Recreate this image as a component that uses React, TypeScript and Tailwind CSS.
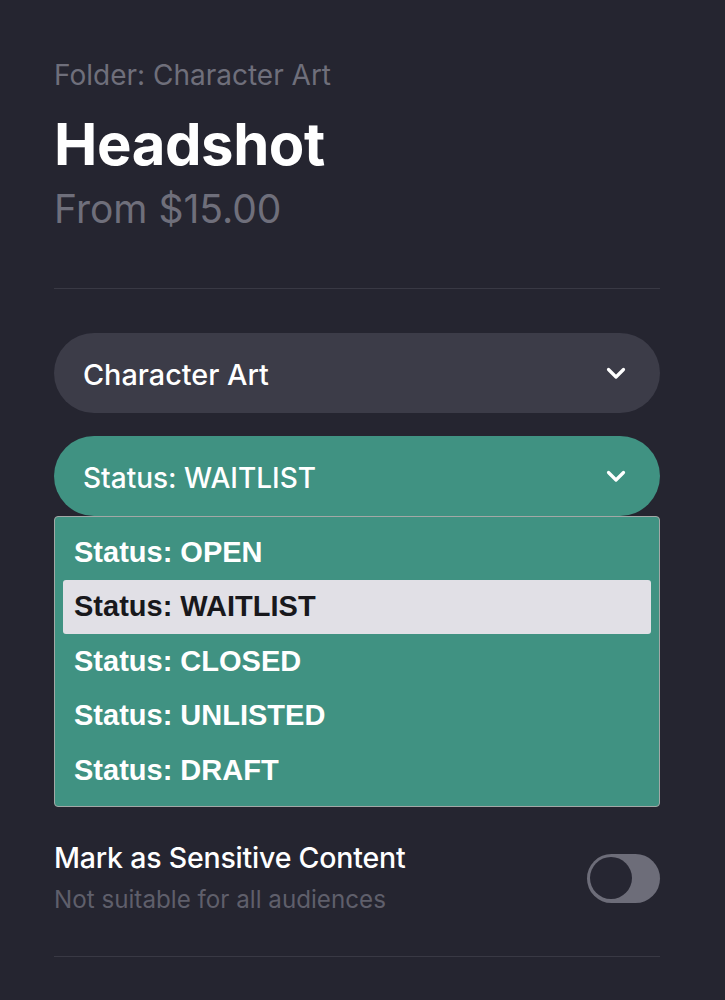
import { useState } from "react";

const statuses = ["OPEN", "WAITLIST", "CLOSED", "UNLISTED", "DRAFT"];

function Chevron() {
  return (
    <svg width="20" height="13" viewBox="0 0 20 13" fill="none">
      <polyline points="2.5,2.5 10,10 17.5,2.5" stroke="white" strokeWidth="3.2" strokeLinecap="round" strokeLinejoin="round" />
    </svg>
  );
}

export default function App() {
  const [status, setStatus] = useState("WAITLIST");
  const [sensitive, setSensitive] = useState(false);

  return (
    <div className="min-h-screen bg-[#252530] font-['Inter',sans-serif]">
      <div className="ml-[54px] w-[606px] pt-[58px] pb-[42px]">
        {/* header */}
        <div className="text-[28px] leading-[34px] text-[#6f6f7b]">Folder: Character Art</div>
        <h1 className="mt-[19px] text-[58px] leading-[66px] font-bold text-white tracking-[-0.4px]">Headshot</h1>
        <div className="mt-[9px] text-[39px] leading-[46px] text-[#6f6f7b]">From $15.00</div>

        <div className="mt-[56px] h-px bg-[#393944]" />

        {/* selects */}
        <div className="mt-[44px] flex h-[80px] items-center justify-between rounded-full bg-[#3c3c48] pl-[29px] pr-[34px]">
          <span className="pt-[3px] text-[28.8px] font-medium text-white">Character Art</span>
          <Chevron />
        </div>

        <div className="relative mt-[23px]">
          <div className="flex h-[80px] items-center justify-between rounded-full bg-[#409282] pl-[29px] pr-[34px]">
            <span className="pt-[3px] text-[28px] font-medium text-white">Status: {status}</span>
            <Chevron />
          </div>

          {/* open menu */}
          <div className="absolute left-0 right-0 top-full z-10 rounded-[4px] border border-[#a3a8a6] bg-[#409282] px-[8px] py-[8px] font-['Liberation_Sans',Arial,sans-serif]">
            {statuses.map((s) => (
              <div
                key={s}
                onClick={() => setStatus(s)}
                className={
                  s === status
                    ? "flex h-[54.5px] items-center rounded-[3px] bg-[#e1e0e6] pl-[11px] text-[29px] font-bold text-[#18181c]"
                    : "flex h-[54.5px] items-center pl-[11px] text-[29px] font-bold text-white"
                }
              >
                Status: {s}
              </div>
            ))}
          </div>
        </div>

        {/* sensitive toggle */}
        <div className="mt-[325px] flex items-center justify-between">
          <div>
            <div className="text-[28.5px] leading-[34px] font-medium text-white tracking-[-0.2px]">Mark as Sensitive Content</div>
            <div className="mt-[10px] text-[24.2px] leading-[30px] text-[#5f5f6b]">Not suitable for all audiences</div>
          </div>
          <button
            onClick={() => setSensitive(!sensitive)}
            className={
              sensitive
                ? "flex h-[49px] w-[73px] items-center justify-end rounded-full bg-[#409282] px-[3px]"
                : "flex h-[49px] w-[73px] items-center rounded-full bg-[#6d6d79] px-[3px]"
            }
          >
            <span className="h-[42px] w-[42px] rounded-full bg-[#262632]" />
          </button>
        </div>

        <div className="mt-[41px] h-px bg-[#393944]" />
      </div>
    </div>
  );
}
